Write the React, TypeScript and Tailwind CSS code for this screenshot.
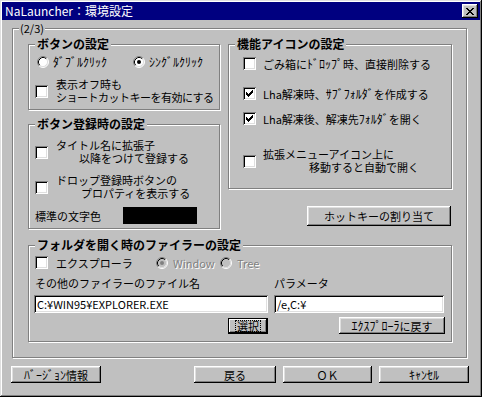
import type { ReactNode } from 'react';

const raised =
  'shadow-[inset_-1px_-1px_0_#000,inset_1px_1px_0_#fff,inset_-2px_-2px_0_#808080,inset_2px_2px_0_#dfdfdf]';
const sunken =
  'shadow-[inset_1px_1px_0_#808080,inset_-1px_-1px_0_#fff,inset_2px_2px_0_#000,inset_-2px_-2px_0_#dfdfdf]';
const etched = 'border border-[#808080] shadow-[1px_1px_0_#fff,inset_1px_1px_0_#fff]';

// half-width katakana look a bit bigger in the original font
function H({ children }: { children: ReactNode }) {
  return <span className="text-[12px]">{children}</span>;
}

function Check({ checked }: { checked?: boolean }) {
  return (
    <span className={`w-[13px] h-[13px] shrink-0 bg-white flex items-center justify-center ${sunken}`}>
      {checked && (
        <svg width="7" height="7" viewBox="0 0 7 7" shapeRendering="crispEdges">
          <path d="M0 2h1v1h1v1h1V3h1V2h1V1h1V0h1v3H6v1H5v1H4v1H3v1H2V6H1V5H0z" fill="#000" />
        </svg>
      )}
    </span>
  );
}

function Radio({ checked, disabled }: { checked?: boolean; disabled?: boolean }) {
  return (
    <svg width="12" height="12" viewBox="0 0 12 12" className="shrink-0">
      <circle cx="6" cy="6" r="5" fill={disabled ? '#c0c0c0' : '#fff'} />
      <path d="M2.11 9.89 A5.5 5.5 0 0 1 9.89 2.11" stroke="#808080" fill="none" />
      <path d="M9.89 2.11 A5.5 5.5 0 0 1 2.11 9.89" stroke="#fff" fill="none" />
      <path d="M2.82 9.18 A4.5 4.5 0 0 1 9.18 2.82" stroke="#000" fill="none" />
      <path d="M9.18 2.82 A4.5 4.5 0 0 1 2.82 9.18" stroke="#dfdfdf" fill="none" />
      {checked && <circle cx="6" cy="6" r="2" fill={disabled ? '#808080' : '#000'} />}
    </svg>
  );
}

function Group({ title, className, children }: { title: string; className?: string; children: ReactNode }) {
  return (
    <div className={`${etched} flex flex-col ${className ?? ''}`}>
      <div className="self-start -mt-[8px] ml-[6px] px-[2px] bg-[#c0c0c0] font-bold text-[12px] leading-[14px]">
        {title}
      </div>
      {children}
    </div>
  );
}

function Btn({ className, children }: { className?: string; children: ReactNode }) {
  return (
    <button className={`bg-[#c0c0c0] flex items-center justify-center text-[11px] leading-[12px] ${raised} ${className ?? ''}`}>
      {children}
    </button>
  );
}

export default function App() {
  return (
    <div
      className={`w-[482px] h-[397px] bg-[#c0c0c0] p-[2px] flex flex-col whitespace-nowrap text-[11px] leading-[12px] text-black font-['Noto_Sans_CJK_JP',sans-serif] shadow-[inset_-1px_-1px_0_#000,inset_1px_1px_0_#dfdfdf,inset_-2px_-2px_0_#808080,inset_2px_2px_0_#fff]`}
    >
      {/* title bar */}
      <div className="h-[18px] bg-[#000080] flex items-center pl-[3px] pr-[2px]">
        <span className="text-white text-[12px] leading-[14px]">NaLauncher：環境設定</span>
        <button className={`ml-auto w-[16px] h-[14px] bg-[#c0c0c0] flex items-center justify-center ${raised}`}>
          <svg width="8" height="7" viewBox="0 0 8 7" shapeRendering="crispEdges">
            <path
              d="M0 0h2v1h1v1h2V1h1V0h2v1H7v1H6v1H5v1h1v1h1v1h1v1H6V6H5V5H3v1H2v1H0V6h1V5h1V4h1V3H2V2H1V1H0z"
              fill="#000"
            />
          </svg>
        </button>
      </div>

      <div className="flex flex-col pl-[10px] pt-[8px]">
        {/* (2/3) frame */}
        <div className={`w-[455px] h-[330px] ${etched} flex flex-col`}>
          <div className="self-start -mt-[7px] ml-[6px] px-[1px] bg-[#c0c0c0]">(2/3)</div>

          <div className="flex gap-[8px] ml-[15px] mt-[10px]">
            {/* left column */}
            <div className="w-[192px] flex flex-col">
              <Group title="ボタンの設定" className="h-[66px]">
                <div className="flex items-center mt-[5px] ml-[8px] h-[12px]">
                  <div className="w-[96px] flex items-center gap-[4px]">
                    <Radio />
                    <H>ﾀﾞﾌﾞﾙｸﾘｯｸ</H>
                  </div>
                  <div className="flex items-center gap-[4px]">
                    <Radio checked />
                    <H>ｼﾝｸﾞﾙｸﾘｯｸ</H>
                  </div>
                </div>
                <div className="flex items-center gap-[8px] mt-[10px] ml-[6px]">
                  <Check />
                  <div className="flex flex-col leading-[13px]">
                    <span>表示オフ時も</span>
                    <span className="tracking-[-0.5px]">ショートカットキーを有効にする</span>
                  </div>
                </div>
              </Group>

              <Group title="ボタン登録時の設定" className="h-[105px] mt-[14px]">
                <div className="flex items-center gap-[8px] mt-[8px] ml-[6px]">
                  <Check />
                  <div className="flex flex-col leading-[13px]">
                    <span>タイトル名に拡張子</span>
                    <span className="pl-[23px]">以降をつけて登録する</span>
                  </div>
                </div>
                <div className="flex items-center gap-[8px] mt-[9px] ml-[6px]">
                  <Check />
                  <div className="flex flex-col leading-[13px]">
                    <span>ドロップ登録時ボタンの</span>
                    <span className="pl-[25px]">プロパティを表示する</span>
                  </div>
                </div>
                <div className="flex items-center mt-[7px] ml-[6px]">
                  <span className="w-[88px]">標準の文字色</span>
                  <div className="w-[74px] h-[17px] bg-black" />
                </div>
              </Group>
            </div>

            {/* right column */}
            <div className="w-[224px] flex flex-col">
              <Group title="機能アイコンの設定" className="h-[145px]">
                <div className="flex items-center gap-[7px] mt-[6px] ml-[14px]">
                  <Check />
                  <span>
                    ごみ箱に<H>ﾄﾞﾛｯﾌﾟ</H>時、直接削除する
                  </span>
                </div>
                <div className="flex items-center gap-[7px] mt-[17px] ml-[14px]">
                  <Check checked />
                  <span>
                    Lha解凍時、<H>ｻﾌﾞﾌｫﾙﾀﾞ</H>を作成する
                  </span>
                </div>
                <div className="flex items-center gap-[7px] mt-[12px] ml-[14px]">
                  <Check checked />
                  <span>
                    Lha解凍後、解凍先<H>ﾌｫﾙﾀﾞ</H>を開く
                  </span>
                </div>
                <div className="flex items-center gap-[7px] mt-[23px] ml-[14px]">
                  <Check />
                  <div className="flex flex-col leading-[13px]">
                    <span>拡張メニューアイコン上に</span>
                    <span className="pl-[46px]">移動すると自動で開く</span>
                  </div>
                </div>
              </Group>
              <Btn className="self-end mr-[1px] mt-[17px] w-[144px] h-[20px]">ホットキーの割り当て</Btn>
            </div>
          </div>

          {/* folder filer group */}
          <Group title="フォルダを開く時のファイラーの設定" className="w-[424px] h-[97px] ml-[15px] mt-[16px]">
            <div className="flex items-center mt-[4px] ml-[6px] h-[13px]">
              <div className="w-[121px] flex items-center gap-[8px]">
                <Check />
                <span>エクスプローラ</span>
              </div>
              <div className="w-[64px] flex items-center gap-[5px] text-[#808080] [text-shadow:1px_1px_0_#fff]">
                <Radio checked disabled />
                <span>Window</span>
              </div>
              <div className="flex items-center gap-[5px] text-[#808080] [text-shadow:1px_1px_0_#fff]">
                <Radio disabled />
                <span>Tree</span>
              </div>
            </div>
            <div className="flex gap-[6px] mt-[8px] ml-[5px]">
              <div className="w-[234px] flex flex-col">
                <span className="pl-[1px]">その他のファイラーのファイル名</span>
                <div className={`mt-[6px] h-[18px] bg-white flex items-center pl-[3px] ${sunken}`}>
                  C:¥WIN95¥EXPLORER.EXE
                </div>
                <button className="self-end mt-[5px] w-[40px] h-[16px] border border-black bg-[#c0c0c0] flex">
                  <span className="flex-1 flex items-center justify-center shadow-[inset_-1px_-1px_0_#000,inset_1px_1px_0_#fff,inset_-2px_-2px_0_#808080]">
                    <span className="border border-dotted border-black leading-[10px] px-[1px]">選択</span>
                  </span>
                </button>
              </div>
              <div className="w-[170px] flex flex-col">
                <span>パラメータ</span>
                <div className={`mt-[6px] h-[18px] bg-white flex items-center pl-[3px] ${sunken}`}>/e,C:¥</div>
                <Btn className="self-end -mr-[1px] mt-[4px] w-[106px] h-[17px]">
                  <H>ｴｸｽﾌﾟﾛｰﾗ</H>に戻す
                </Btn>
              </div>
            </div>
          </Group>
        </div>
      </div>

      {/* bottom buttons */}
      <div className="flex items-center pl-[9px] mt-[8px]">
        <Btn className="w-[90px] h-[17px]">
          <H>ﾊﾞｰｼﾞｮﾝ</H>情報
        </Btn>
        <Btn className="ml-auto w-[82px] h-[17px]">戻る</Btn>
        <Btn className="ml-[7px] w-[89px] h-[17px]">ＯＫ</Btn>
        <Btn className="ml-[7px] mr-[11px] w-[90px] h-[17px]">
          <H>ｷｬﾝｾﾙ</H>
        </Btn>
      </div>
    </div>
  );
}
